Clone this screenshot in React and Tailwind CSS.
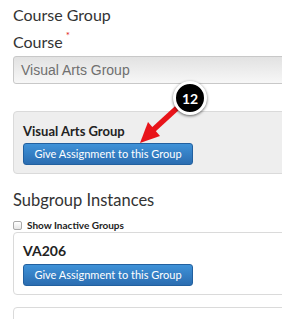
export default function App() {
  // Canvas-style group page with an annotation callout
  const font = { fontFamily: 'Lato, "Open Sans", sans-serif' };

  return (
    <div className="relative w-[282px] h-[319px] overflow-hidden bg-white text-[#333]" style={font}>
      <div className="pl-[13px]">
        <div className="mt-[5px] text-[16px] leading-[20px]">Course Group</div>
        <div className="mt-[7px] text-[16px] leading-[20px] flex">
          <span>Course</span>
          <span className="text-[#e0161c] text-[10px] leading-[10px] ml-[3px] mt-[-2px]">*</span>
        </div>

        <div className="mt-[4px] w-[300px] h-[28px] border border-[#c8c8c8] rounded-[3px] bg-gradient-to-b from-[#e2e2e2] to-[#f7f7f7] flex items-center pl-[7px] text-[14px] text-[#6f6f6f] font-['Liberation_Sans',Arial,sans-serif]">
          Visual Arts Group
        </div>

        <div className="mt-[27px] w-[300px] border border-[#dadada] rounded-[4px] bg-[#eeeeee] pt-[10px] pb-[8px] pl-[9px]">
          <div className="text-[13px] leading-[18px] font-bold text-[#222]">Visual Arts Group</div>
          <button className="mt-[3px] w-[170px] h-[22px] rounded-[3px] border border-[#22609f] bg-gradient-to-b from-[#3f92d8] to-[#2b6db1] text-white text-[11px] leading-[20px]">
            Give Assignment to this Group
          </button>
        </div>

        <div className="mt-[16px] text-[16.5px] leading-[20px]">Subgroup Instances</div>
        <div className="mt-[9px] h-[12px] flex items-center gap-[5px]">
          <span className="w-[9px] h-[9px] rounded-[2px] border border-[#a9a9a9] bg-gradient-to-b from-white to-[#e6e6e6]" />
          <span className="text-[10px] font-bold text-[#222]">Show Inactive Groups</span>
        </div>

        <div className="mt-[1px] w-[300px] border border-[#dadada] rounded-[4px] bg-white pt-[9px] pb-[8px] pl-[9px]">
          <div className="text-[14px] leading-[18px] font-bold text-[#222]">VA206</div>
          <button className="mt-[4px] w-[170px] h-[22px] rounded-[3px] border border-[#22609f] bg-gradient-to-b from-[#3f92d8] to-[#2b6db1] text-white text-[11px] leading-[20px]">
            Give Assignment to this Group
          </button>
        </div>

        <div className="mt-[12px] w-[300px] h-[30px] border border-[#dadada] rounded-[4px] bg-white" />
      </div>

      {/* callout arrow */}
      <svg className="absolute left-0 top-0 pointer-events-none" width="282" height="319">
        <line x1="188" y1="98" x2="152" y2="131" stroke="#e8141a" strokeWidth="5.5" />
        <polygon points="140,143 160,136 148,122" fill="#e8141a" />
      </svg>

      {/* numbered badge */}
      <div className="absolute left-[173px] top-[81px] w-[34px] h-[34px] rounded-full bg-black border-[3px] border-white shadow-[0_1px_3px_rgba(0,0,0,0.6)] flex items-center justify-center text-white text-[14px] font-bold">
        12
      </div>
    </div>
  );
}
